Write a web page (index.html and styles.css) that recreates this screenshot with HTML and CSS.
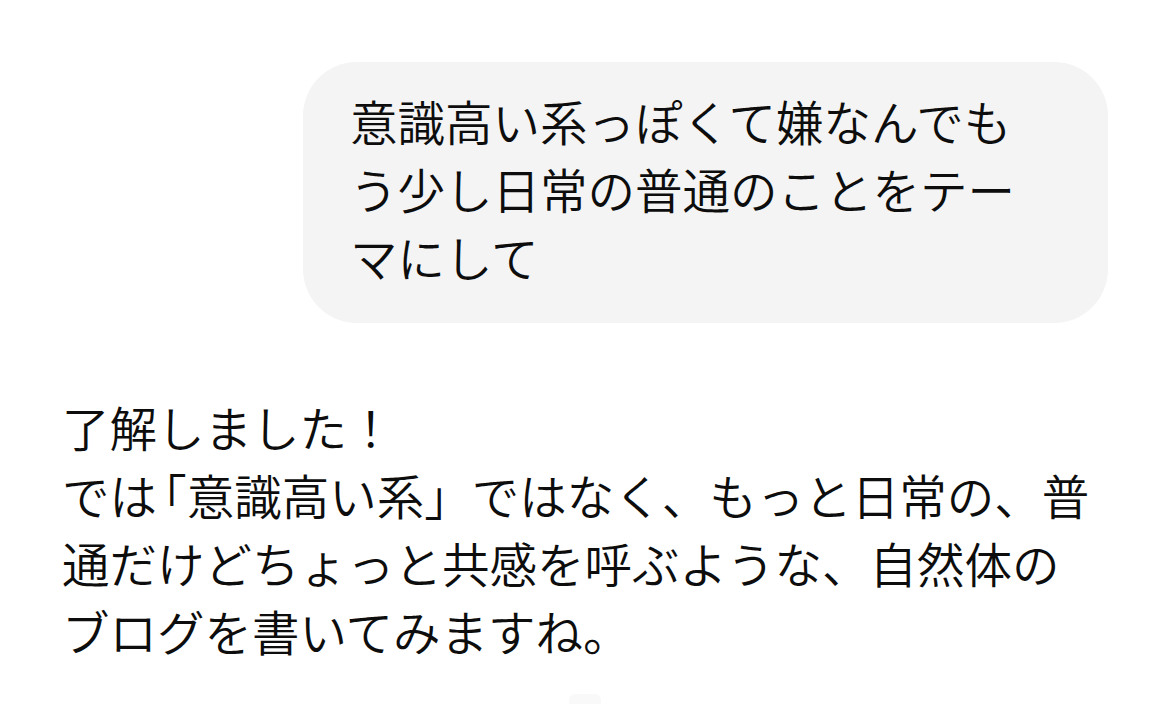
FILE: index.html
```html
<!DOCTYPE html>
<html lang="ja">
<head>
    <meta charset="UTF-8">
    <meta name="viewport" content="width=device-width, initial-scale=1.0">
    <title>チャット</title>
    <link rel="stylesheet" href="styles.css">
</head>
<body>
    <div class="chat">
        <!-- ユーザーのメッセージ -->
        <div class="message-row user-row">
            <div class="bubble">意識高い系っぽくて嫌なんでもう少し日常の普通のことをテーマにして</div>
        </div>

        <!-- アシスタントの返信 -->
        <div class="message-row assistant-row">
            <p class="reply">了解しました！<br>では<span class="open-kakko">「</span>意識高い系」ではなく、もっと日常の、普通だけどちょっと共感を呼ぶような、自然体のブログを書いてみますね。</p>
        </div>

        <div class="scroll-hint"></div>
    </div>
</body>
</html>
```

FILE: styles.css
```css
body {
    font-family: "Noto Sans CJK JP", "Noto Sans", sans-serif;
    font-weight: 350;
    background-color: #fff;
    margin: 0;
    padding: 0;
    color: #0d0d0d;
}

.chat {
    display: flex;
    flex-direction: column;
    padding-top: 62px;
}

.message-row {
    display: flex;
}

.user-row {
    justify-content: flex-end;
    padding-right: 62px;
}

.bubble {
    width: 686px;
    padding: 25px 72px 32px 47px;
    background-color: #f4f4f4;
    border-radius: 54px;
    font-size: 47.5px;
    line-height: 68px;
}

.assistant-row {
    padding: 70px 70px 0 62px;
}

.reply {
    margin: 0;
    font-size: 47.5px;
    line-height: 68px;
}

.open-kakko {
    font-feature-settings: "halt";
    margin-left: 6px;
}

.scroll-hint {
    align-self: center;
    width: 32px;
    height: 20px;
    margin-top: 29px;
    background-color: #f9f9f9;
    border-radius: 6px;
}
```
